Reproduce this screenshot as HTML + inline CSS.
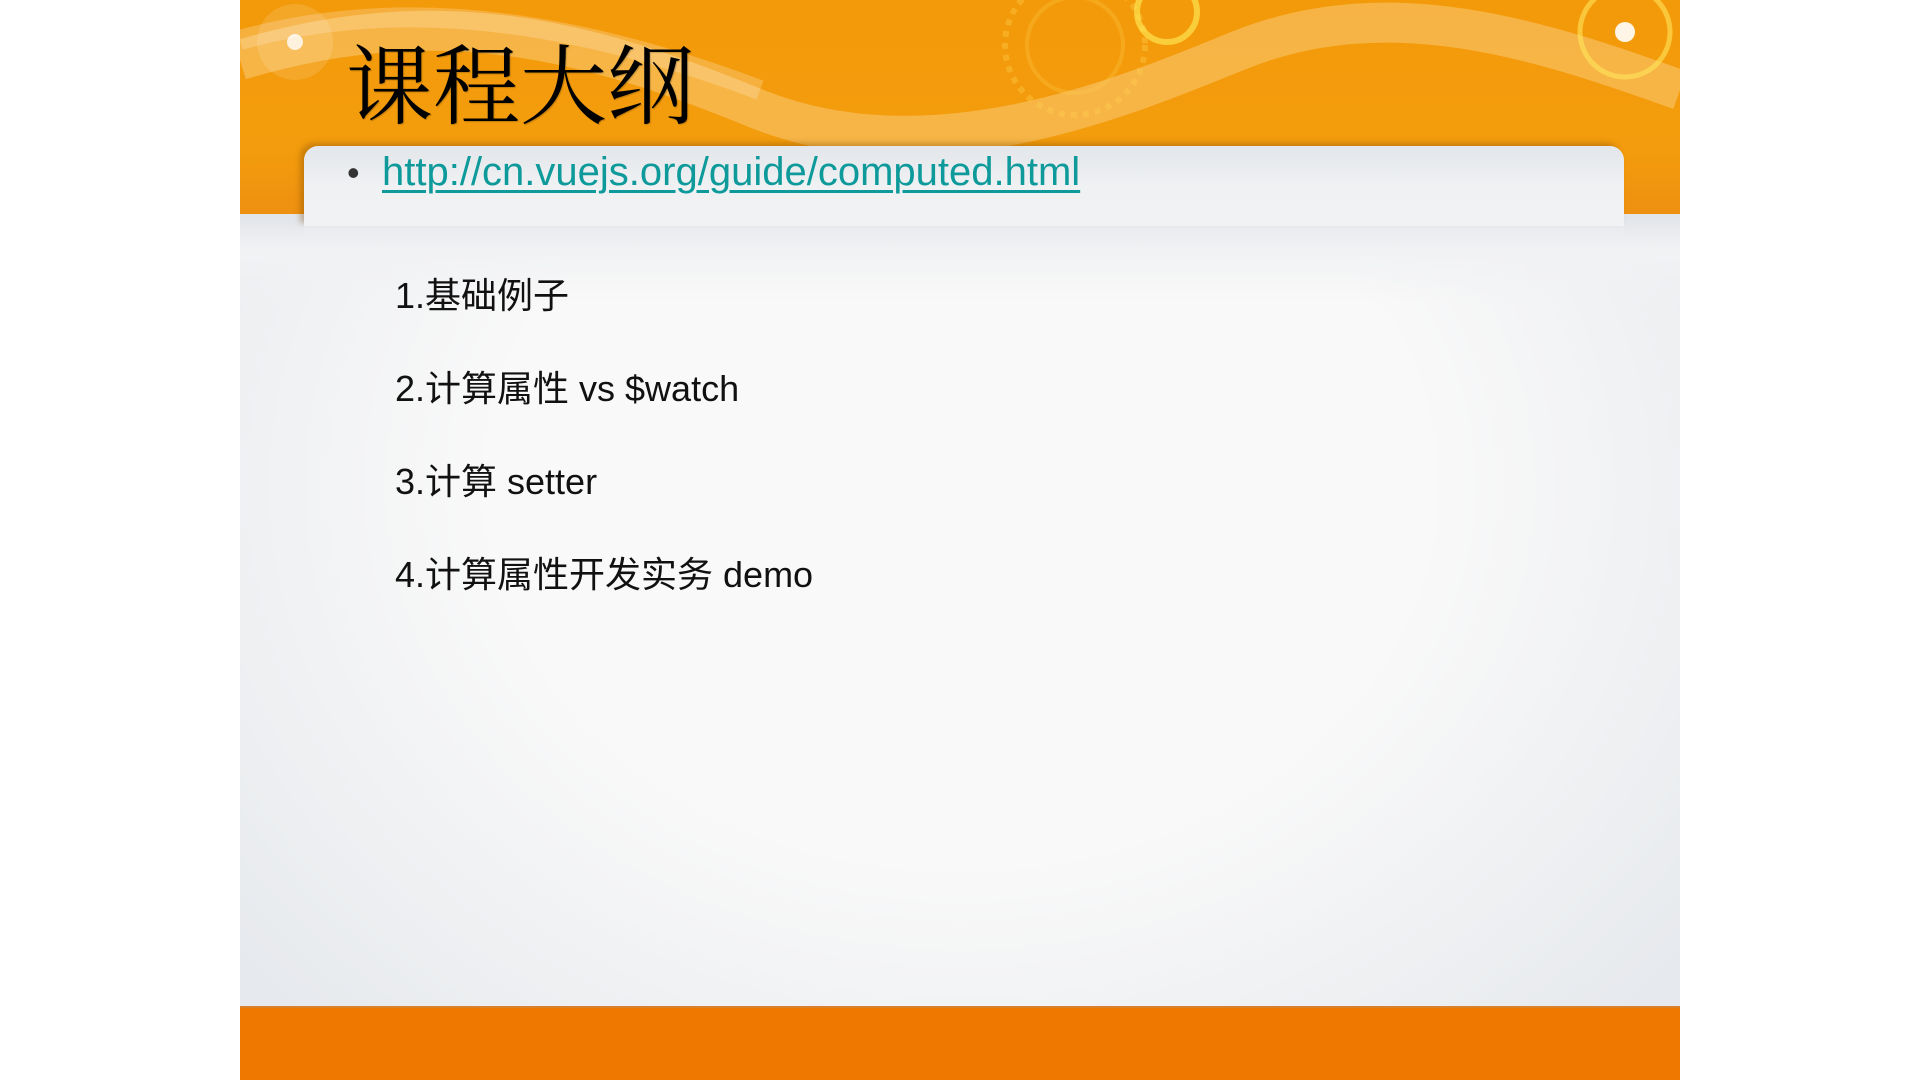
<!DOCTYPE html>
<html><head><meta charset="utf-8"><style>
html,body{margin:0;padding:0;background:#fff;}
body{width:1920px;height:1080px;position:relative;overflow:hidden;font-family:"Liberation Sans","Noto Sans CJK SC",sans-serif;}
#slide{position:absolute;left:240px;top:0;width:1440px;height:1080px;overflow:hidden;
background:radial-gradient(ellipse 65% 70% at 50% 45%,#f9f9f9 50%,#e6e9ed 100%);}
#top{position:absolute;left:0;top:0;width:1440px;height:214px;background:linear-gradient(180deg,#f39a0a 0%,#f39c0d 70%,#ee9010 100%);}
#wave{position:absolute;left:0;top:0;}
#panel{position:absolute;left:64px;top:146px;width:1320px;height:80px;border-radius:14px 14px 0 0;
background:linear-gradient(180deg,#e3e6ea 0%,#eff1f3 50%,#f1f2f4 100%);box-shadow:-4px -3px 6px rgba(120,70,0,.35);}
#under{position:absolute;left:0;top:214px;width:1440px;height:90px;background:linear-gradient(180deg,#e1e4e8,#f1f2f4 40%,rgba(247,247,247,0));}
#cover{position:absolute;left:64px;top:200px;width:1320px;height:40px;background:linear-gradient(180deg,#f1f2f4,rgba(241,242,244,0));}
#bottom{position:absolute;left:0;top:1006px;width:1440px;height:74px;background:#ee7800;border-top:2px solid #d9822e;}
h1{position:absolute;left:106px;top:38px;margin:0;font-family:"Liberation Serif","Noto Serif CJK SC",serif;font-weight:normal;font-size:87px;line-height:100px;color:#000;text-shadow:1px 1px 1px rgba(0,0,0,.2);}
.b{position:absolute;left:107px;top:150px;font-size:36px;line-height:46px;color:#333;}
.link{position:absolute;left:142px;top:149px;font-size:40px;line-height:46px;color:#0e9a9a;text-decoration:underline;text-decoration-thickness:3px;text-underline-offset:5px;}
.it{position:absolute;left:155px;font-size:36px;line-height:40px;color:#111;}
</style></head><body>
<div id="slide">
<div id="top">
<svg id="wave" width="1440" height="214">
<path d="M0 60 C200 0 350 40 520 110 C700 180 900 90 1000 50 C1150 -10 1300 40 1440 90" stroke="rgba(255,230,180,.35)" stroke-width="40" fill="none"/>
<path d="M0 40 C180 -10 360 30 520 90" stroke="rgba(255,240,210,.25)" stroke-width="20" fill="none"/>
<circle cx="55" cy="42" r="38" fill="rgba(255,255,255,.12)"/>
<circle cx="55" cy="42" r="8" fill="rgba(255,255,255,.8)"/>
<circle cx="835" cy="45" r="70" fill="none" stroke="rgba(255,210,80,.35)" stroke-width="6" stroke-dasharray="6 6"/>
<circle cx="835" cy="45" r="48" fill="none" stroke="rgba(255,210,80,.25)" stroke-width="4"/>
<circle cx="927" cy="12" r="30" fill="none" stroke="rgba(255,240,90,.6)" stroke-width="6"/>
<circle cx="1385" cy="32" r="45" fill="none" stroke="rgba(255,230,90,.6)" stroke-width="5"/>
<circle cx="1385" cy="32" r="10" fill="rgba(255,255,255,.9)"/>
</svg>
</div>
<div id="under"></div>
<div id="panel"></div>
<div id="cover"></div>
<h1>课程大纲</h1>
<div class="b">•</div>
<div class="link">http://cn.vuejs.org/guide/computed.html</div>
<div class="it" style="top:276px">1.基础例子</div>
<div class="it" style="top:369px">2.计算属性 vs $watch</div>
<div class="it" style="top:462px">3.计算 setter</div>
<div class="it" style="top:555px">4.计算属性开发实务 demo</div>
<div id="bottom"></div>
</div>
</body></html>
